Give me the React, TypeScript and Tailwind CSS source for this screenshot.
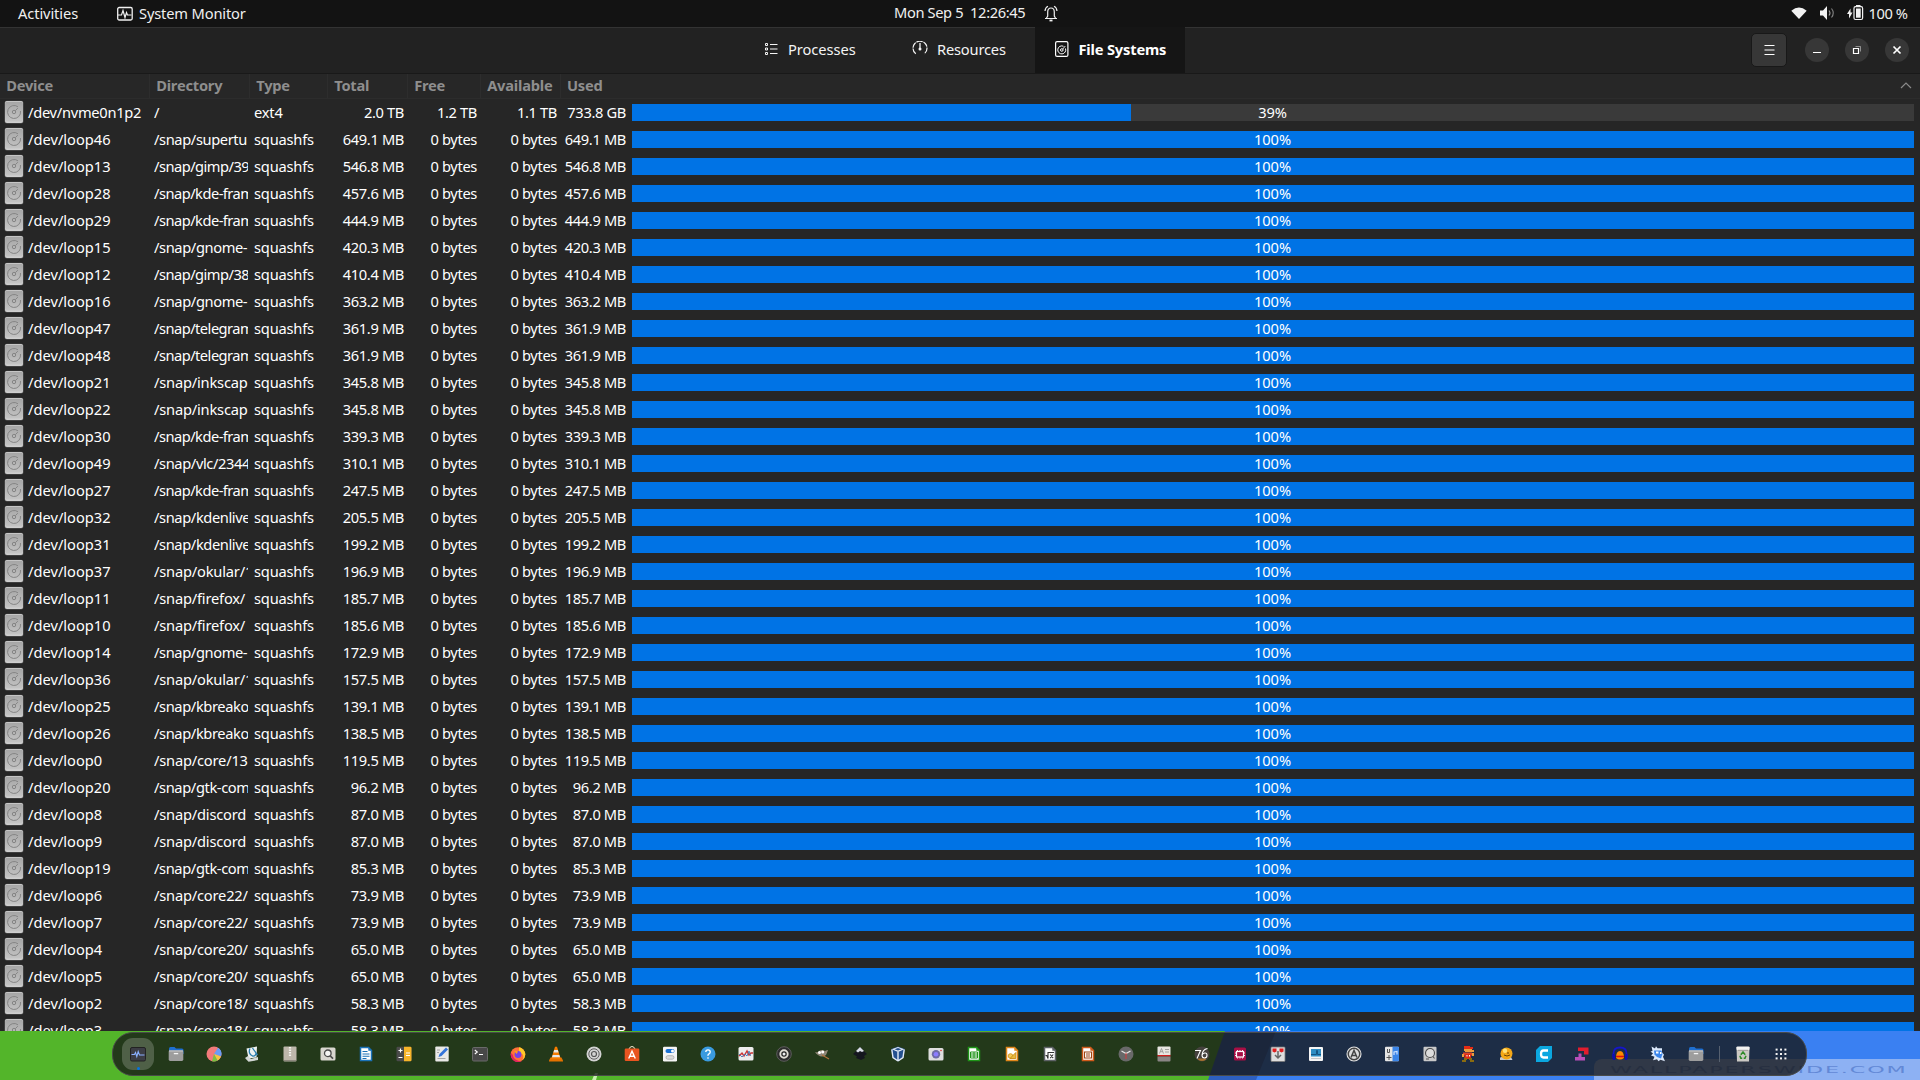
import React from "react";

type Row = [dev: string, dir: string, type: string, total: string, free: string, avail: string, used: string, pct: number];

const snap = (n: string, dir: string, size: string): Row => [
  `/dev/loop${n}`, `/snap/${dir}`, "squashfs", size, "0 bytes", "0 bytes", size, 100,
];

const rows: Row[] = [
  ["/dev/nvme0n1p2", "/", "ext4", "2.0 TB", "1.2 TB", "1.1 TB", "733.8 GB", 38.95],
  snap("46", "supertu", "649.1 MB"),
  snap("13", "gimp/39", "546.8 MB"),
  snap("28", "kde-fram", "457.6 MB"),
  snap("29", "kde-fram", "444.9 MB"),
  snap("15", "gnome-", "420.3 MB"),
  snap("12", "gimp/38", "410.4 MB"),
  snap("16", "gnome-", "363.2 MB"),
  snap("47", "telegram", "361.9 MB"),
  snap("48", "telegram", "361.9 MB"),
  snap("21", "inkscap", "345.8 MB"),
  snap("22", "inkscap", "345.8 MB"),
  snap("30", "kde-fram", "339.3 MB"),
  snap("49", "vlc/2344", "310.1 MB"),
  snap("27", "kde-fram", "247.5 MB"),
  snap("32", "kdenlive", "205.5 MB"),
  snap("31", "kdenlive", "199.2 MB"),
  snap("37", "okular/1", "196.9 MB"),
  snap("11", "firefox/", "185.7 MB"),
  snap("10", "firefox/", "185.6 MB"),
  snap("14", "gnome-", "172.9 MB"),
  snap("36", "okular/1", "157.5 MB"),
  snap("25", "kbreako", "139.1 MB"),
  snap("26", "kbreako", "138.5 MB"),
  snap("0", "core/13", "119.5 MB"),
  snap("20", "gtk-com", "96.2 MB"),
  snap("8", "discord", "87.0 MB"),
  snap("9", "discord", "87.0 MB"),
  snap("19", "gtk-com", "85.3 MB"),
  snap("6", "core22/", "73.9 MB"),
  snap("7", "core22/", "73.9 MB"),
  snap("4", "core20/", "65.0 MB"),
  snap("5", "core20/", "65.0 MB"),
  snap("2", "core18/", "58.3 MB"),
  snap("3", "core18/", "58.3 MB"),
];

const dirTracking = (dir: string) => {
  if (/kde-|gimp|telegram/.test(dir)) return "tracking-[-0.520px]";
  if (/gnome|kdenlive|vlc|gtk|supertu|kbreak/.test(dir)) return "tracking-[-0.390px]";
  return "tracking-[-0.200px]";
};

const DiskIcon = () => (
  <svg width="20" height="24" viewBox="0 0 20 24" className="shrink-0">
    <rect x="0.5" y="0.8" width="19" height="22.6" rx="2.5" fill="#5a5a5a" />
    <rect x="1" y="1" width="18" height="22" rx="2" fill="#cfcfcf" />
    <rect x="1" y="1.800" width="18" height="19.700" rx="2" fill="url(#diskGrad)" />
    <path d="M14 6.800A6.500 6.500 0 1 0 16.500 11" fill="none" stroke="#858585" strokeWidth="1" />
    <circle cx="10" cy="12" r="1.700" fill="none" stroke="#858585" strokeWidth="1" />
    <path d="M11.300 10.700l2.500-2.500" stroke="#858585" strokeWidth="1" />
  </svg>
);

const columns = ["Device", "Directory", "Type", "Total", "Free", "Available"];

function Doc({ c, children }: { c: string; children: React.ReactNode }) {
  return (
    <>
      <path d="M2.500 1.500h8l3 3v10h-11z" fill="#fff" stroke={c} strokeWidth="1.500" />
      <path d="M10.300 1.500v3.200h3.200z" fill={c} />
      {children}
    </>
  );
}

const Folder = () => (
  <>
    <path d="M1 3q0-2 1.500-2h4l1.500 1.500h6q1.500 0 1.500 1.500v4h-14.500z" fill="#1f6fd0" />
    <rect x="0.700" y="4.300" width="14.600" height="10.700" rx="1.400" fill="#9d9d9d" />
    <path d="M1 5h14" stroke="#d5d5d5" strokeWidth="0.800" />
    <path d="M5.800 7.600h4.400" stroke="#f5f5f5" strokeWidth="1.300" />
  </>
);

const apps: React.ReactNode[] = [
  <>
    <rect x="0.500" y="1.500" width="15" height="13.500" rx="1.500" fill="#3c3d45" stroke="#222" />
    <path d="M1.500 8.500h3l1-2 1.300 4 1.400-5 1.300 3.500h5" fill="none" stroke="#8ab0ff" strokeWidth="1.100" />
  </>,
  <Folder />,
  <>
    <circle cx="8" cy="8" r="7.500" fill="#f27b7b" />
    <path d="M8 8L12 1.700A7.500 7.500 0 0 1 15 10.500z" fill="#6b9cf5" />
    <path d="M8 8l7 2.500a7.500 7.500 0 0 1-3.500 4z" fill="#f5c542" />
    <path d="M8 8l3.500 6.500A7.500 7.500 0 0 1 6 15.200z" fill="#7bc043" />
  </>,
  <>
    <path d="M2.500 2.500L13 .5l-.5 11-8 1z" fill="#eef2f2" />
    <path d="M6 2.500c-1.500 3-.5 6.500 2.500 7.500 2.500.5 3.500-1.500 3.500-3M8.500 2q2 3 5 7" fill="none" stroke="#2c7fb0" strokeWidth="1.300" />
    <path d="M1 12l3-2 3 3 7-2v3l-9.500 1.800z" fill="#d3d8d6" />
  </>,
  <>
    <rect x="1.500" y="0.500" width="13" height="15" rx="1" fill="#bdb7ab" />
    <path d="M8 1v9" stroke="#f4f2ee" strokeWidth="2.200" strokeDasharray="1.500 1" />
    <path d="M2 14.500h12" stroke="#8e897f" />
  </>,
  <>
    <rect x="0.500" y="1.500" width="15" height="13" rx="1.500" fill="#d9d7d0" />
    <circle cx="7.800" cy="7.300" r="3.300" fill="#f5f5f3" stroke="#4a4a4a" strokeWidth="1.300" />
    <path d="M10.300 10l2.700 2.700" stroke="#4a4a4a" strokeWidth="1.700" />
  </>,
  <Doc c="#1a72b8"><path d="M4.500 5.500h5M4.500 8h7M4.500 10.300h7M4.500 12.500h4" stroke="#1a72b8" strokeWidth="1.100" /></Doc>,
  <>
    <rect x="0.500" y="0.700" width="15" height="14.600" rx="1.300" fill="#4a4a4a" />
    <path d="M8 .7h6.200q1.300 0 1.300 1.300v12q0 1.300-1.300 1.300H8z" fill="#f7b529" />
    <path d="M2.500 4.500h4M4.500 2.500v4M2.500 11.500h4M10 7h4M10 9.500h4" stroke="#fff" strokeWidth="1.200" />
  </>,
  <>
    <rect x="1.300" y="0.600" width="13.400" height="14.800" rx="1" fill="#e9e9e7" />
    <path d="M3.500 12.500h8M3 4h3M3 6.500h2" stroke="#a5a5a5" />
    <path d="M4.500 11l1-3L12 1.500l2 2L7.500 10z" fill="#3373d9" />
  </>,
  <>
    <rect x="0.500" y="1.500" width="15" height="13.500" rx="1.200" fill="#484848" stroke="#6a6a6a" />
    <path d="M2.800 4l2.500 2-2.500 2M7 8.500h4" fill="none" stroke="#fff" strokeWidth="1.100" />
  </>,
  <>
    <circle cx="8" cy="8.500" r="7.300" fill="#ff7139" />
    <path d="M9 1.300c3 .5 6.300 3.500 6.300 7.200a7 7 0 0 1-3 5.500c3-5-1-7-3.300-7.500z" fill="#ffca28" />
    <path d="M1 7a7.300 7.300 0 0 0 11 8c-4 .5-9-2-9-6z" fill="#e2245f" />
    <circle cx="8" cy="8.500" r="3.400" fill="#7542e5" />
    <path d="M4 5q3-1 4 .7L6.500 8z" fill="#ff9a1f" />
  </>,
  <>
    <path d="M1 14.500l1.500-3h11l1.500 3v1H1z" fill="#e57200" />
    <path d="M7 .8h2L12.800 13H3.200z" fill="#f57c00" />
    <path d="M6.200 4h3.600l.8 2.500H5.400zM4.700 9h6.600l.8 2.300H4z" fill="#e8e8e8" />
  </>,
  <>
    <circle cx="8" cy="8" r="7.500" fill="#d3d3d3" />
    <circle cx="8" cy="8" r="5.200" fill="none" stroke="#606060" strokeWidth="1" />
    <circle cx="8" cy="8" r="2.500" fill="none" stroke="#555" strokeWidth="1.200" />
  </>,
  <>
    <path d="M5 3q3-5 6 0" fill="none" stroke="#d8d0b8" strokeWidth="1.200" />
    <rect x="0.700" y="2.500" width="14.600" height="12.500" rx="1.200" fill="#e95420" />
    <path d="M4.700 12.500L8 5.200l3.300 7.300M5.500 10.300h5" fill="none" stroke="#fff" strokeWidth="1.400" />
  </>,
  <>
    <rect x="1" y="0.700" width="14" height="14.800" rx="1.200" fill="#f4f4f4" />
    <rect x="3.500" y="3" width="9" height="4" rx="2" fill="#1a72d4" />
    <circle cx="10.500" cy="5" r="1.500" fill="#fff" />
    <rect x="4" y="9.700" width="8" height="3.500" rx="1.700" fill="#dcdcdc" stroke="#a8a8a8" strokeWidth="0.800" />
  </>,
  <>
    <circle cx="8" cy="8" r="7.500" fill="#3a9be0" />
    <path d="M5.800 6q0-2.200 2.200-2.200T10.200 6q0 1.200-1.200 1.800T8 9.800M8 11.200v1.500" fill="none" stroke="#fff" strokeWidth="1.300" />
  </>,
  <>
    <rect x="0.500" y="1" width="15" height="13.500" rx="1.500" fill="#ededed" />
    <path d="M1 10l3-3 2 3 3-5 2 4 2-2h2" fill="none" stroke="#c33" strokeWidth="1.400" />
    <path d="M1 8l3 3 3-3 2 2 2-5 1.500 5" fill="none" stroke="#447ab8" strokeWidth="0.900" />
  </>,
  <>
    <circle cx="8" cy="8" r="7.300" fill="#2d2d2d" stroke="#5d5d5d" />
    <circle cx="8" cy="8" r="3.700" fill="#222" stroke="#e0ddd5" strokeWidth="1.900" />
    <circle cx="8" cy="8" r="1.500" fill="#eee" />
  </>,
  <>
    <path d="M1 6q3 1 4-1 3-2 6 0 2-1 3-1-1 3-2 5-4 3-8 0-2-1-3-3z" fill="#8f8676" />
    <circle cx="5.500" cy="6.500" r="1.500" fill="#fff" />
    <circle cx="8.700" cy="6" r="1.500" fill="#fff" />
    <path d="M8 9l7 4" stroke="#b3733a" strokeWidth="1.100" />
  </>,
  <>
    <path d="M8 1l7 7-3 2 1 2-4 2-5-2 1-1.500L1 8z" fill="#15171f" />
    <path d="M8 1l4 4-2 1-2-1-2 1.500L4 5z" fill="#d9dee8" />
  </>,
  <>
    <path d="M1.200 3L8 .5 14.800 3l-1.300 8.500L8 15.500l-5.500-4z" fill="#24508f" />
    <path d="M1.700 3.200L8 1l6.300 2.200L8 6z" fill="#e3ebf6" />
    <path d="M4.500 3.200L8 2l3.500 1.200L8 4.600z" fill="#24508f" />
    <path d="M8 6v9M1.800 3.500l1.200 8 5 3.500M14.200 3.500l-1.200 8-5 3.500" fill="none" stroke="#e3ebf6" strokeWidth="1.400" />
  </>,
  <>
    <rect x="0.500" y="2" width="15" height="12.500" rx="1.500" fill="#dedede" />
    <circle cx="8" cy="8.300" r="4.200" fill="#6e6ba6" />
    <circle cx="8" cy="8.300" r="2.300" fill="#8c7dff" />
    <circle cx="13" cy="4.500" r="0.800" fill="#d33" />
  </>,
  <Doc c="#1f9418"><path d="M4.500 6h7v6h-7zM8 6v6M4.500 8h7M4.500 10h7" fill="none" stroke="#1f9418" strokeWidth="1" /></Doc>,
  <Doc c="#e0861a">
    <circle cx="6.500" cy="10" r="2.300" fill="#f0c95a" stroke="#d0941c" strokeWidth="0.900" />
    <path d="M11.800 6.500v6H6z" fill="#e5b93c" stroke="#c98a14" strokeWidth="0.900" />
  </Doc>,
  <Doc c="#5f6368"><path d="M3.500 9.500h1.300l1.200 3V6.500h6M8.200 8.500l3 3.700M11.200 8.500l-3 3.700" fill="none" stroke="#333" strokeWidth="1.100" /></Doc>,
  <Doc c="#cf5a1a"><path d="M4.500 6h7v6h-7zM6 8h4M6 10h4" fill="none" stroke="#9c4312" strokeWidth="1.100" /></Doc>,
  <>
    <circle cx="8" cy="8" r="7.500" fill="#696969" />
    <path d="M3.500 5L8 7.500 12.500 5" fill="none" stroke="#e5e5e5" strokeWidth="1.300" />
    <path d="M8 7v6" stroke="#d93b3b" strokeWidth="1" />
  </>,
  <>
    <rect x="1.500" y="0.500" width="13" height="9" rx="1" fill="#e8e6e2" />
    <path d="M1.500 9h13v1.500h-13z" fill="#d21f1f" />
    <path d="M1.500 10.500h13v4q0 1-1 1h-11q-1 0-1-1z" fill="#8a8585" />
    <path d="M3.500 7.500l2-5 2 5M4.300 5.700h2.400M9 3.500h4M9 6h4" fill="none" stroke="#8f8f8f" strokeWidth="0.800" />
  </>,
  <>
    <circle cx="8" cy="8" r="7.500" fill="#45423e" />
    <path d="M4 13.500q4 3 8 0v-1H4z" fill="#a5712e" />
    <path d="M1 4.500h5.500L3 12.500M13.500 2.500q-5 1-5.500 6.500 0 3 2.500 3T13 9.300 10.700 7 8.300 9" fill="none" stroke="#fff" strokeWidth="1.100" />
  </>,
  <>
    <rect x="2" y="1.500" width="12" height="13" rx="1.500" fill="#a80f45" />
    <rect x="4.500" y="5.500" width="7" height="5.500" fill="none" stroke="#fff" strokeWidth="1.200" />
    <path d="M5.500 4v1M8 4v1M10.500 4v1M5.500 11.500v1M8 11.500v1M10.500 11.500v1M3 7h1M3 9.500h1M12 7h1M12 9.500h1" stroke="#fff" strokeWidth="0.900" />
  </>,
  <>
    <rect x="1" y="1" width="14" height="14.500" rx="0.800" fill="#dedede" stroke="#777" strokeWidth="0.800" />
    <path d="M2.500 2.500h4v3l-2 1-2-1zM9.500 2.500h4v3l-2 1-2-1z" fill="#e01f1f" />
    <path d="M8 5v7M5 9l3 3 3-3" fill="none" stroke="#666" strokeWidth="1.500" />
  </>,
  <>
    <rect x="1" y="1" width="14" height="14" rx="1" fill="#f5f5f5" />
    <path d="M3 3h10v7.500H3z" fill="#2f8ec4" />
    <path d="M3 8.500h5.500v-4h1v4H13" fill="none" stroke="#14507c" strokeWidth="0.900" />
    <path d="M3 12.500h10" stroke="#c8c8c8" />
  </>,
  <>
    <circle cx="8" cy="8" r="7" fill="#444" stroke="#e2e2e2" strokeWidth="1.100" />
    <circle cx="8" cy="8" r="5" fill="#ddd" />
    <path d="M5 11.500L8 4.500l3 7M6 9.500h4" fill="none" stroke="#444" strokeWidth="1.500" />
  </>,
  <>
    <rect x="1" y="0.700" width="14" height="14.600" rx="1" fill="#e5e5e5" />
    <path d="M8.500.7H14q1 0 1 1v12.600q0 1-1 1H8.500z" fill="#3b85e8" />
    <path d="M3.500 3v3.500h2V3M2.500 11.500h5M5 9v5" fill="none" stroke="#555" strokeWidth="1" />
    <path d="M10 9V6l3-.5v3" fill="none" stroke="#cfe2ff" strokeWidth="1.200" />
  </>,
  <>
    <rect x="1.500" y="0.700" width="13" height="14.600" rx="1" fill="#c9c9c9" />
    <circle cx="8" cy="7" r="4.500" fill="#ddd" stroke="#4a4a4a" strokeWidth="1.100" />
    <path d="M11 10.500l1.500 2M4 13h3" stroke="#555" strokeWidth="1.100" />
  </>,
  <>
    <path d="M4 0h6v1h3v2H4z" fill="#e32b14" />
    <path d="M4 3h8v1h2v2H5V5H4z" fill="#eb9d3c" />
    <path d="M3 6.500h9v3H3z" fill="#e0452a" />
    <path d="M2 8h2v3H2zM12 7h2v3h-2z" fill="#eb9d3c" />
    <path d="M5 8h6v5H4z" fill="#e32b14" />
    <path d="M4 12h3v2H4zM9 12h3v2H9z" fill="#8a6b10" />
    <path d="M2 14h4v2H2zM10 14h4v2h-4z" fill="#8a6b10" />
    <path d="M6.500 9h1v1.500h-1zM9 9h1v1.500H9z" fill="#fff" />
  </>,
  <>
    <path d="M2 12q0-1 2-1h9l1.500 3H2z" fill="#c8c8c8" />
    <circle cx="8.500" cy="7.500" r="6" fill="#f5a817" />
    <circle cx="7" cy="4.800" r="2.200" fill="#ffe27a" />
    <path d="M10 6v2M6 9q3 2 6 0" stroke="#6b4107" strokeWidth="1" fill="none" />
  </>,
  <>
    <path d="M4 0h12v12l-4 4H0V4z" fill="#0ba7e0" />
    <path d="M12 4.500H7.500Q5 4.500 5 8t2.500 3.500H12" fill="none" stroke="#fff" strokeWidth="2.300" />
  </>,
  <>
    <path d="M4 1.500h10.500v7H10V5H4z" fill="#e11d2e" />
    <path d="M4.500 7.500h3v3.500H11v3.500H1V11h3.500z" fill="#b94fb9" />
  </>,
  <>
    <path d="M1.500 12V7.500q0-6 6.500-6t6.500 6V12" fill="none" stroke="#1616c9" strokeWidth="1.800" />
    <path d="M0 8h3v6H1zM13 8h3l-1 6h-2z" fill="#1010b0" />
    <path d="M4 12q0-7 4-7t4 7q-4 3-8 0z" fill="#ff8a00" />
    <path d="M4 10.500h8" fill="none" stroke="#d11" strokeWidth="1.600" />
  </>,
  <>
    <path d="M1.500.5l3.500 2L6 .3l1.500 2H12v4l2 2.500-1 2 2 4.500-4.500-1.500-2 1.500-1.500-2-4 1 1.500-3.500L1 9.500 3 7.500.500 5.500l2-.5z" fill="#dce9fb" />
    <path d="M4 4.500h7.500l1 3.500-1.500 4.500-4-1.500-2.500-2.500z" fill="#3b86ec" />
    <path d="M6 5.500h2.500v2H6zM10 6h1.500v2H10z" fill="#fff" />
  </>,
  <Folder />,
];

const Trash = () => (
  <>
    <path d="M1.500 1h13l-.5 14.500H2z" fill="#cbc9c4" />
    <rect x="1.500" y="0.500" width="13" height="3.500" rx="1" fill="#f3f2f0" />
    <path d="M3 4.300h10" stroke="#8c8a86" strokeWidth="0.700" />
    <path d="M5.800 8.700L8 6l2.200 2.700M11 9.700l-1 2.500H8.700M7.200 12.200H5.800L4.900 9.700" fill="none" stroke="#2f8b2a" strokeWidth="1.500" />
  </>
);

const AppsGrid = () => (
  <>
    {[4, 8, 12].flatMap((y) => [4, 8, 12].map((x) => <rect key={`${x}-${y}`} x={(x - 8) * 1.1 + 7} y={(y - 8) * 1.1 + 7} width="2" height="2" fill="#f2f2f2" />))}
  </>
);

const DockSlot = ({ children, active }: { children: React.ReactNode; active?: boolean }) => (
  <div className="relative flex h-full w-[38px] shrink-0 items-center justify-center">
    {active && <div className="absolute left-[3px] top-[5px] h-8 w-8 rounded-[11px] bg-white/20" />}
    {active && <div className="absolute left-[17.500px] top-[34px] h-[3px] w-[3px] rounded-full bg-[#0073e5]" />}
    <svg width="16" height="16" viewBox="0 0 16 16" className="relative">{children}</svg>
  </div>
);

const WindowButton = ({ children }: { children: React.ReactNode }) => (
  <div className="flex h-6 w-6 items-center justify-center rounded-full bg-[#373737] text-white">
    <svg width="12" height="12" viewBox="0 0 12 12" fill="none" stroke="currentColor">{children}</svg>
  </div>
);

export default function App() {
  return (
    <div className="flex h-[1080px] w-[1920px] flex-col overflow-hidden bg-[#262626] font-['Noto_Sans','Open_Sans',sans-serif] text-[14.67px] text-white">
      <svg width="0" height="0" className="absolute">
        <defs>
          <linearGradient id="diskGrad" x1="0" y1="0" x2="0" y2="1">
            <stop offset="0" stopColor="#a6a6a6" />
            <stop offset="1" stopColor="#c4c4c4" />
          </linearGradient>
        </defs>
      </svg>

      {/* Top bar */}
      <div className="grid h-[27px] shrink-0 grid-cols-[894px_1fr_129px] bg-[#131313] leading-[26px] text-[#f0f0f0]">
        <div className="flex pl-[18px] tracking-[-0.1px]">
          <span className="w-[98px]">Activities</span>
          <svg width="18" height="16" viewBox="0 0 18 16" className="mt-[6px] mr-[5px]" fill="none" stroke="#f0f0f0">
            <rect x="1.700" y="1.500" width="14.500" height="12.500" rx="1.500" strokeWidth="1.300" />
            <path d="M2 9h3.500l1.500-4.500 2 7 1.500-5 1 2.500h4" strokeWidth="1.200" />
          </svg>
          <span className="tracking-[-0.150px]">System Monitor</span>
        </div>
        <div className="flex leading-[25px]">
          <span className="w-[150px] whitespace-pre tracking-[-0.370px]">Mon Sep 5  12:26:45</span>
          <svg width="14" height="17" viewBox="0 0 14 17" className="mt-[4.500px]" fill="none" stroke="#f0f0f0" strokeWidth="1.200">
            <path d="M1 13.500h12M2.500 13l1.200-2V7q0-4 3.300-4t3.300 4v4l1.200 2M1 6q.3-3.500 3-4.700M13 6q-.3-3.500-3-4.700" />
            <path d="M5.500 15.500h3" strokeWidth="1.800" />
          </svg>
        </div>
        <div className="flex">
          <svg width="16" height="12" viewBox="0 0 16 12" className="mt-[7px]"><path d="M.3 3.800Q8-3 15.700 3.800L8 12z" fill="#f2f2f2" /></svg>
          <svg width="16" height="14" viewBox="0 0 16 14" className="mt-[6px] ml-[13px]" fill="none">
            <path d="M0 4.500h3L7 0v14L3 9.500H0z" fill="#f2f2f2" />
            <path d="M9 4.500q2 2.500 0 5" stroke="#f2f2f2" strokeWidth="1.100" opacity=".6" />
            <path d="M11.500 2.500q3.500 4.500 0 9" stroke="#f2f2f2" strokeWidth="1.100" opacity=".5" />
          </svg>
          <svg width="17" height="16" viewBox="0 0 17 16" className="mt-[5px] ml-[11px]">
            <path d="M3.500 3.500L0 9h2v4.500L5.500 7.500h-2z" fill="#f2f2f2" />
            <rect x="7" y="1.700" width="8.600" height="12.800" rx="1.500" fill="none" stroke="#f2f2f2" strokeWidth="1.200" />
            <rect x="9" y="3.500" width="4.700" height="9.200" fill="#f2f2f2" />
            <rect x="9" y="0" width="4.500" height="1.500" fill="#f2f2f2" />
          </svg>
          <span className="ml-[4.500px] whitespace-nowrap tracking-[-0.400px]">100 %</span>
        </div>
      </div>

      {/* Header bar */}
      <div className="grid h-[47px] shrink-0 grid-cols-[735px_1fr_169px] border-t border-b border-t-[#333] border-b-[#191919] bg-[#222]">
        <div />
        <div className="flex leading-[43px] text-[#f4f4f4]">
          <div className="flex w-[149px] pl-[30px]">
            <svg width="13" height="12" viewBox="0 0 13 12" className="mt-[15px] mr-[10px]" fill="none" stroke="#f4f4f4">
              <path d="M5 1.500h7.500M5 6h7.500M5 10.500h7.500" />
              <path d="M.5.500h2v2h-2zM.5 5h2v2h-2zM.5 9.500h2v2h-2z" />
            </svg>
            <span className="tracking-[-0.050px]">Processes</span>
          </div>
          <div className="flex w-[151px] pl-[28px]">
            <svg width="16" height="14" viewBox="0 0 16 14" className="mt-[13px] mr-[9px]" fill="none" stroke="#f4f4f4" strokeWidth="1.200">
              <path d="M3.800 12.800A7 7 0 1 1 12.200 12.800" strokeDasharray="6 .8" />
              <path d="M8 2v6" strokeWidth="1.300" />
              <circle cx="8" cy="8" r="1.500" fill="#f4f4f4" stroke="none" />
            </svg>
            <span className="tracking-[-0.180px]">Resources</span>
          </div>
          <div className="-mt-px flex h-[46px] w-[150px] bg-[#151515] pl-[20px] pt-px font-bold text-white">
            <svg width="14" height="16" viewBox="0 0 14 16" className="mt-[13px] mr-[9.500px]" fill="none" stroke="#fff">
              <rect x="0.600" y="0.600" width="12.300" height="14.800" rx="1.500" strokeWidth="1.200" />
              <path d="M8.500 5.300A4 4 0 1 0 10.500 7.500" strokeWidth="1" />
              <circle cx="6.800" cy="9" r="1.300" />
              <path d="M7.800 8l2.500-3" strokeWidth="0.900" />
            </svg>
            <span className="whitespace-nowrap tracking-[-0.180px]">File Systems</span>
          </div>
        </div>
        <div className="flex items-center">
          <div className="-mt-px flex h-[34px] w-[36px] items-center justify-center rounded-[5px] border border-[#181818] bg-[#373737]">
            <svg width="11" height="10" viewBox="0 0 11 10" stroke="#fff" className="-mt-px"><path d="M.5.500h10M.5 5h10M.5 9.500h10" /></svg>
          </div>
          <div className="-mt-px ml-[18px] flex gap-4">
            <WindowButton><path d="M2 8.500h8" /></WindowButton>
            <WindowButton><path d="M2.500 4.500h5v5h-5z" strokeWidth="1.200" /><path d="M4.500 2.500h5v5" opacity=".45" /></WindowButton>
            <WindowButton><path d="M2.500 2.500l7 7M9.500 2.500l-7 7" strokeWidth="1.700" /></WindowButton>
          </div>
        </div>
      </div>

      {/* Column titles */}
      <div className="grid h-[25px] shrink-0 grid-cols-[150px_100px_78px_80px_73px_80px_1fr] border-b border-[#2c2c2c] bg-[#272727] font-bold leading-[23px] tracking-[-0.220px] text-[#8e8e8e]">
        {columns.map((c) => (
          <div key={c} className="border-r border-[#2d2d2d] pl-[6.200px]">{c}</div>
        ))}
        <div className="flex items-start justify-between pl-[6px] pr-[8px]">
          <span>Used</span>
          <svg width="12" height="7" viewBox="0 0 12 7" className="mt-[8px]" fill="none" stroke="#8a8a8a" strokeWidth="1.200"><path d="M1 6l5-5 5 5" /></svg>
        </div>
      </div>

      {/* File system rows */}
      <div className="h-[932px] shrink-0 overflow-hidden">
        {rows.map(([dev, dir, type, total, free, avail, used, pct]) => (
          <div key={dev} className="grid h-[27px] grid-cols-[154px_94px_80px_76px_73px_80px_69px_1fr] whitespace-nowrap leading-[26px]">
            <div className="flex items-start pl-1 pt-px">
              <DiskIcon />
              <span className={dev.length > 12 ? "-mt-px ml-[4px] tracking-[-0.280px]" : "-mt-px ml-[4px]"}>{dev}</span>
            </div>
            <div className={`overflow-hidden ${dirTracking(dir)}`}>{dir}</div>
            <div className="pl-[6px] tracking-[-0.200px]">{type}</div>
            {[total, free, avail, used].map((v, i) => (
              <div key={i} className="flex justify-end tracking-[-0.350px]">{v}</div>
            ))}
            <div className="pl-[2px] pr-[6px] pt-[5px]">
              <div className="relative ml-1 h-[17px] bg-[#3a3a3a]">
                <div className="h-full bg-[#0073e5]" style={{ width: `${pct}%` }} />
                <div className="absolute inset-0 right-[1px] text-center leading-[16px] tracking-[-0.100px]">{Math.round(pct)}%</div>
              </div>
            </div>
          </div>
        ))}
      </div>

      {/* Desktop strip with the dock */}
      <div className="relative h-[49px] shrink-0 overflow-hidden bg-[#53b52a] pl-[112px] pt-[1px]">
        <svg width="1920" height="49" viewBox="0 0 1920 49" className="absolute inset-0">
          <path d="M1225 0h695v49H1208z" fill="#2d5fc0" />
          <path d="M1276 0h644v49H1256z" fill="#3a80f2" />
          <path d="M592 49l3-7h3l-2 7z" fill="#c9f0b0" />
        </svg>
        <div className="absolute left-[1594px] top-[28px] h-6 w-[340px] rounded-tl-lg bg-[#a3bdf2]/80 pl-4">
          <span className="inline-block origin-left scale-x-[2.340] whitespace-nowrap align-top font-['DejaVu_Sans'] text-[9.500px] leading-[21px] tracking-[0.800px] text-[#6288d6]">WALLPAPERSWIDE.COM</span>
        </div>
        <div className="relative flex h-[44px] w-[1695px] rounded-[21px] border border-[#494b49] bg-[#161616]/78 pl-[6px]">
          {apps.map((a, i) => (
            <DockSlot key={i} active={i === 0}>{a}</DockSlot>
          ))}
          <div className="flex w-[9px] items-center justify-center"><div className="h-4 w-px bg-[#56606f]" /></div>
          <DockSlot><Trash /></DockSlot>
          <DockSlot><AppsGrid /></DockSlot>
        </div>
      </div>
    </div>
  );
}
